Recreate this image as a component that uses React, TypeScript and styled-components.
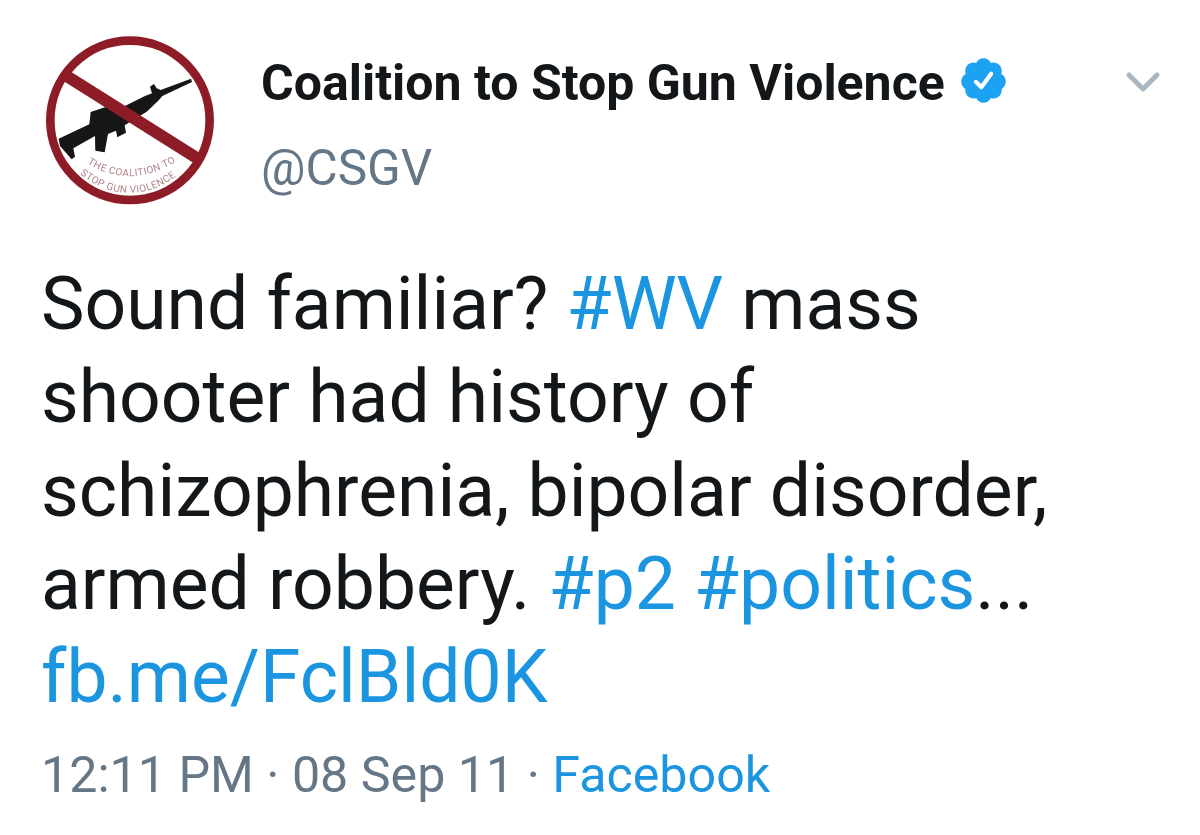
import React from "react";
import styled, { createGlobalStyle } from "styled-components";

const Global = createGlobalStyle`
  html, body { margin: 0; padding: 0; background: #fff; }
  body { width: 1200px; height: 835px; overflow: hidden; font-family: Roboto, "Liberation Sans", sans-serif; -webkit-font-smoothing: antialiased; }
`;

const Page = styled.main`
  width: 1200px;
  height: 835px;
  box-sizing: border-box;
  padding: 36px 0 0 42px;
  background: #fff;
  display: flex;
  flex-direction: column;
`;

const Header = styled.header`
  display: flex;
  align-items: flex-start;
`;

const Avatar = styled.svg`
  width: 176px;
  height: 170px;
  flex: none;
  margin-right: 43px;
`;

const Identity = styled.div`
  display: flex;
  flex-direction: column;
  width: 862.5px;
  padding-top: 19px;
`;

const NameRow = styled.div`
  display: flex;
  align-items: center;
  height: 56px;
`;

const Name = styled.span`
  font-size: 50px;
  font-weight: 700;
  color: #14171a;
  white-space: nowrap;
`;

const Badge = styled.svg`
  width: 51px;
  height: 51px;
  margin: 0 0 6px 13px;
  flex: none;
`;

const Handle = styled.div`
  font-size: 49.5px;
  line-height: 58px;
  margin-top: 28px;
  color: #657786;
`;

const Chevron = styled.svg`
  width: 38px;
  height: 24px;
  flex: none;
  margin: 34px 0 0 0;
`;

const Body = styled.p`
  margin: 52px 0 0 -1px;
  font-size: 73.2px;
  line-height: 93.3px;
  color: #14171a;
  white-space: nowrap;
`;

const Tag = styled.span`
  color: #1b95e0;
`;

const Meta = styled.div`
  margin: 23px 0 0 -1px;
  font-size: 50.2px;
  line-height: 56px;
  color: #657786;
  white-space: nowrap;
`;

const Source = styled.span`
  color: #1b95e0;
`;

export default function App() {
  return (
    <>
      <Global />
      <Page>
        <Header>
          <Avatar viewBox="0 0 176 170" aria-hidden="true">
            <defs>
              <path id="arcOuter" d="M172 430 Q 300 510 440 424" />
              <path id="arcInner" d="M150 462 Q 300 578 454 458" />
              <filter id="soft" x="-5%" y="-5%" width="110%" height="110%">
                <feGaussianBlur stdDeviation="1.6" />
              </filter>
            </defs>
            <g transform="translate(-12 -16) scale(0.3333)" filter="url(#soft)">
              <path
                fill="#141414"
                d="M483 176 L486 186 L397 228 L385 242 L350 275 L284 316 L288 338 L262 352 L258 332 L234 342 L224 397 L196 392 L195 348 L130 385 L135 410 L125 418 L90 378 L86 356 L178 313 L182 276 L225 262 L285 258 L345 228 L366 220 L360 200 L372 192 L380 205 L392 210 Z"
              />
              <path d="M105 165 L510 420" stroke="#8e1f27" strokeWidth="36" fill="none" />
              <circle cx="300" cy="301" r="239" stroke="#8e1f27" strokeWidth="26" fill="none" />
              <text fontFamily="Roboto, sans-serif" fontSize="30" fill="#b08388" letterSpacing="1.4">
                <textPath href="#arcOuter">THE COALITION TO</textPath>
              </text>
              <text fontFamily="Roboto, sans-serif" fontSize="30" fill="#b08388" letterSpacing="1.4">
                <textPath href="#arcInner">STOP GUN VIOLENCE</textPath>
              </text>
            </g>
          </Avatar>
          <Identity>
            <NameRow>
              <Name>Coalition to Stop Gun Violence</Name>
              <Badge viewBox="0 0 24 24" aria-label="Verified">
                <path fill="#1da1f2" d="M22.5 12.5c0-1.58-.875-2.95-2.148-3.6.154-.435.238-.905.238-1.4 0-2.21-1.71-3.998-3.818-3.998-.47 0-.92.084-1.336.25C14.818 2.415 13.51 1.5 12 1.5s-2.816.917-3.437 2.25c-.415-.165-.866-.25-1.336-.25-2.11 0-3.818 1.79-3.818 4 0 .494.083.964.237 1.4-1.272.65-2.147 2.018-2.147 3.6 0 1.495.782 2.798 1.942 3.486-.02.17-.032.34-.032.514 0 2.21 1.708 4 3.818 4 .47 0 .92-.086 1.335-.25.62 1.334 1.926 2.25 3.437 2.25 1.512 0 2.818-.916 3.437-2.25.415.163.865.248 1.336.248 2.11 0 3.818-1.79 3.818-4 0-.174-.012-.344-.033-.513 1.158-.687 1.943-1.99 1.943-3.484z" />
                <path fill="none" stroke="#fff" strokeWidth="1.9" strokeLinecap="round" strokeLinejoin="round" d="M8.4 12.6 L11 15.2 L15.6 8.8" />
              </Badge>
            </NameRow>
            <Handle>@CSGV</Handle>
          </Identity>
          <Chevron viewBox="0 0 38 24" aria-hidden="true">
            <path d="M5 5 L19 19 L33 5" fill="none" stroke="#aab8c2" strokeWidth="5" strokeLinecap="round" strokeLinejoin="round" />
          </Chevron>
        </Header>
        <Body>
          Sound familiar? <Tag>#WV</Tag> mass
          <br />
          shooter had history of
          <br />
          schizophrenia, bipolar disorder,
          <br />
          armed robbery. <Tag>#p2</Tag> <Tag>#politics</Tag>...
          <br />
          <Tag>fb.me/FclBld0K</Tag>
        </Body>
        <Meta>
          12:11 PM · 08 Sep 11 · <Source>Facebook</Source>
        </Meta>
      </Page>
    </>
  );
}
